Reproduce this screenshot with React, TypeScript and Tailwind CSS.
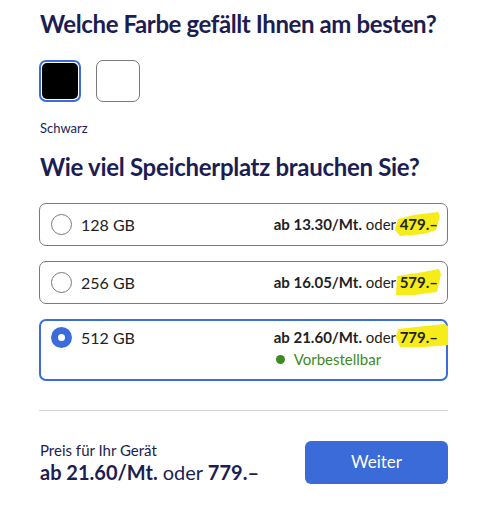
import React from "react";

const options = [
  { size: "128 GB", monthly: "13.30", price: "479.–", hl: "M4 9 L20 5 L44 2 L46 6 L42 20 L30 24 L6 26 L1 20 Z" },
  { size: "256 GB", monthly: "16.05", price: "579.–", hl: "M3 8 L24 5 L45 1 L47 6 L43 24 L20 27 L2 27 Z" },
  { size: "512 GB", monthly: "21.60", price: "779.–", hl: "M4 6 L22 4 L50 1 L54 3 L54 22 L30 24 L6 24 L2 14 Z", selected: true, note: "Vorbestellbar" },
];

function Highlight({ d }: { d: string }) {
  return (
    <svg
      className="pointer-events-none absolute -left-[6px] -top-[5px] h-[28px] w-[56px]"
      viewBox="0 0 56 28"
      preserveAspectRatio="none"
    >
      <path d={d} fill="#f6ec1a" />
    </svg>
  );
}

export default function App() {
  return (
    <div
      className="w-[490px] h-[524px] bg-white pl-[39px] pr-[42px] text-[#1c1d52]"
      style={{ fontFamily: "Lato, 'Noto Sans', sans-serif" }}
    >
      <h2 className="whitespace-nowrap pt-[9px] pl-px text-[24px] font-bold leading-[30px] tracking-[-0.4px]">
        Welche Farbe gefällt Ihnen am besten?
      </h2>
      <div className="mt-[21px] flex gap-[15px]">
        <div className="h-[42px] w-[42px] rounded-[7px] border-2 border-[#3a6ddb] p-px">
          <div className="h-full w-full rounded-[5px] bg-black" />
        </div>
        <div className="h-[42px] w-[44px] rounded-[7px] border border-[#7a7a7a] bg-white" />
      </div>
      <p className="mt-[18px] pl-px text-[13px] leading-[17px]">Schwarz</p>

      <h2 className="mt-[15px] whitespace-nowrap pl-px text-[24px] font-bold leading-[30px] tracking-[-0.3px]">
        Wie viel Speicherplatz brauchen Sie?
      </h2>

      <div className="mt-[21px] flex flex-col gap-[15px]">
        {options.map((o) => (
          <div
            key={o.size}
            className={
              o.selected
                ? "flex min-h-[62px] rounded-[7px] border-2 border-[#3a6ddb] pl-[10px] pr-[8px] pt-[6px] text-[#222]"
                : "flex h-[43px] items-center rounded-[7px] border border-[#7a7a7a] pl-[11px] pr-[9px] text-[#222]"
            }
          >
            <div className="flex flex-1 items-start gap-[9px]">
              {o.selected ? (
                <span className="flex h-[21px] w-[21px] items-center justify-center rounded-full bg-[#3a6ddb]">
                  <span className="h-[7px] w-[7px] rounded-full bg-white" />
                </span>
              ) : (
                <span className="h-[21px] w-[21px] rounded-full border border-[#7a7a7a]" />
              )}
              <span className="text-[16px] leading-[21px]">{o.size}</span>
            </div>
            <div className="flex flex-col items-start">
              <div className="text-[15px] leading-[21px]">
                <span className="font-bold">ab {o.monthly}/Mt.</span>{" "}
                <span>oder</span>{" "}
                <span className="relative font-bold">
                  <Highlight d={o.hl} />
                  <span className="relative">{o.price}</span>
                </span>
              </div>
              {o.note && (
                <div className="mt-[2px] flex items-center gap-[9px] text-[15px] leading-[19px] text-[#3e8a22]">
                  <span className="ml-[2px] h-[9px] w-[9px] rounded-full bg-[#3e8a22]" />
                  {o.note}
                </div>
              )}
            </div>
          </div>
        ))}
      </div>

      <div className="mt-[29px] h-px bg-[#d4d4d4]" />

      <div className="mt-[29px] flex items-center justify-between">
        <div className="pl-px">
          <p className="text-[15px] leading-[20px]">Preis für Ihr Gerät</p>
          <p className="text-[20px] leading-[24px]">
            <span className="font-bold">ab 21.60/Mt.</span> oder{" "}
            <span className="font-bold">779.–</span>
          </p>
        </div>
        <button className="h-[43px] w-[143px] rounded-[6px] bg-[#3a6bd9] text-[17px] text-white">
          Weiter
        </button>
      </div>
    </div>
  );
}
